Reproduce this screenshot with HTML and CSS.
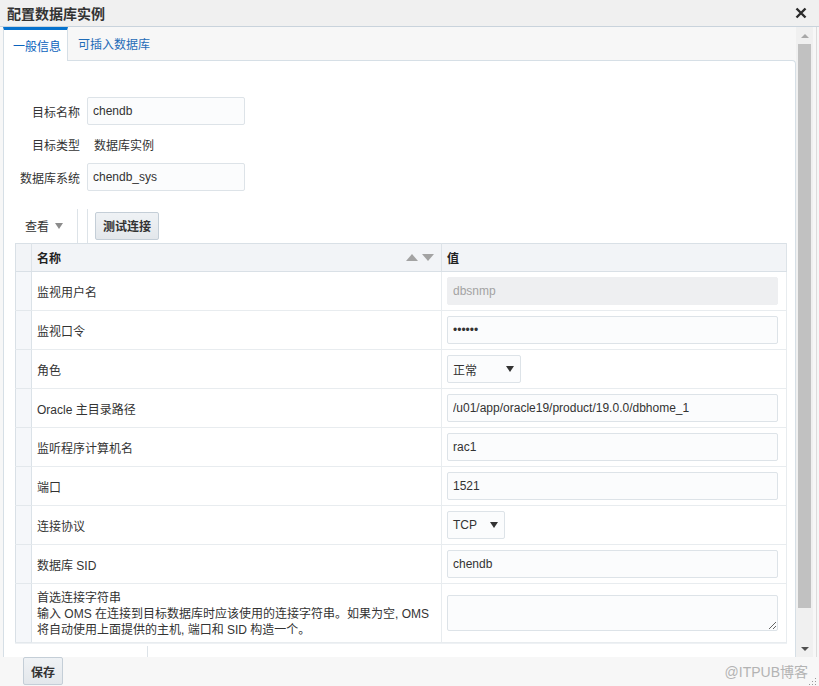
FILE: index.html
```html
<!DOCTYPE html>
<html lang="zh">
<head>
<meta charset="utf-8">
<title>配置数据库实例</title>
<link rel="stylesheet" href="styles.css">
</head>
<body>
<div class="dialog">
  <div class="titlebar">
    <span class="title">配置数据库实例</span>
    <svg class="close" width="12" height="12" viewBox="0 0 12 12"><path d="M1.5 1.5 L10.5 10.5 M10.5 1.5 L1.5 10.5" stroke="#2b2b2b" stroke-width="2.4" fill="none"/></svg>
  </div>
  <div class="main">
    <div class="content">
      <div class="tabs">
        <div class="tab active">一般信息</div>
        <div class="tab">可插入数据库</div>
      </div>
      <div class="panel">
        <div class="form">
          <label class="lbl">目标名称</label><input class="field" type="text" value="chendb">
          <label class="lbl">目标类型</label><span class="static">数据库实例</span>
          <label class="lbl">数据库系统</label><input class="field" type="text" value="chendb_sys">
        </div>
        <div class="toolbar">
          <div class="view">查看<span class="caret"></span></div>
          <div class="sep"></div>
          <div class="sep sep2"></div>
          <button class="btn">测试连接</button>
        </div>
        <table class="grid">
          <colgroup><col class="c-rh"><col class="c-name"><col class="c-val"></colgroup>
          <thead>
            <tr class="hdr">
              <th class="rh"></th>
              <th><div class="th-inner"><span>名称</span><span class="sort"><i class="up"></i><i class="down"></i></span></div></th>
              <th>值</th>
            </tr>
          </thead>
          <tbody>
            <tr><td class="rh"></td><td class="name">监视用户名</td><td class="val"><input class="field wide disabled" type="text" value="dbsnmp" disabled></td></tr>
            <tr><td class="rh"></td><td class="name">监视口令</td><td class="val"><input class="field wide pwd" type="password" value="abcdef"></td></tr>
            <tr><td class="rh"></td><td class="name">角色</td><td class="val"><div class="select s-role"><span>正常</span><span class="sel-arrow"></span></div></td></tr>
            <tr><td class="rh"></td><td class="name">Oracle 主目录路径</td><td class="val"><input class="field wide" type="text" value="/u01/app/oracle19/product/19.0.0/dbhome_1"></td></tr>
            <tr><td class="rh"></td><td class="name">监听程序计算机名</td><td class="val"><input class="field wide" type="text" value="rac1"></td></tr>
            <tr><td class="rh"></td><td class="name">端口</td><td class="val"><input class="field wide" type="text" value="1521"></td></tr>
            <tr><td class="rh"></td><td class="name">连接协议</td><td class="val"><div class="select s-proto"><span>TCP</span><span class="sel-arrow"></span></div></td></tr>
            <tr><td class="rh"></td><td class="name">数据库 SID</td><td class="val"><input class="field wide" type="text" value="chendb"></td></tr>
            <tr class="last"><td class="rh"></td><td class="name desc">首选连接字符串<br>输入 OMS 在连接到目标数据库时应该使用的连接字符串。如果为空, OMS<br>将自动使用上面提供的主机, 端口和 SID 构造一个。</td><td class="val top"><textarea class="area"></textarea></td></tr>
          </tbody>
        </table>
        <div class="after"><div class="vline"></div></div>
      </div>
    </div>
    <div class="scrollbar">
      <div class="sb-btn"><span class="sb-up"></span></div>
      <div class="sb-thumb"></div>
      <div class="sb-track"></div>
      <div class="sb-btn"><span class="sb-down"></span></div>
    </div>
    <div class="edge"></div>
  </div>
  <div class="footer">
    <button class="btn save">保存</button>
    <span class="wm">@ITPUB博客</span>
    <svg class="grip" width="8" height="8" viewBox="0 0 8 8"><rect x="6" y="0" width="1" height="1" fill="#9a9a9a"/><rect x="3" y="3" width="1" height="1" fill="#9a9a9a"/><rect x="6" y="3" width="1" height="1" fill="#9a9a9a"/><rect x="0" y="6" width="1" height="1" fill="#9a9a9a"/><rect x="3" y="6" width="1" height="1" fill="#9a9a9a"/><rect x="6" y="6" width="1" height="1" fill="#9a9a9a"/></svg>
  </div>
</div>
</body>
</html>
```

FILE: styles.css
```css
* { box-sizing: border-box; }
html, body { margin: 0; padding: 0; }
body {
  font-family: "Liberation Sans", "Noto Sans CJK SC", sans-serif;
  font-size: 12px;
  color: #333;
  background: #f7f7f7;
}
.dialog {
  width: 819px;
  height: 686px;
  overflow: hidden;
  display: flex;
  flex-direction: column;
}
.titlebar {
  height: 27px;
  flex: none;
  background: #f0f0f0;
  border-bottom: 1px solid #c9d3dc;
  display: flex;
  align-items: center;
  justify-content: space-between;
  padding: 0 12px 1px 7px;
}
.title { font-size: 14px; font-weight: bold; color: #333; }
.close { display: block; }

.main { display: flex; height: 630px; flex: none; }
.content { width: 796px; display: flex; flex-direction: column; }
.tabs { display: flex; height: 33px; flex: none; padding-left: 3px; }
.tab {
  display: flex;
  align-items: center;
  padding: 0 10px 0 10px;
  color: #1f6cb8;
  font-size: 12px;
}
.tab.active {
  position: relative;
  z-index: 1;
  height: 34px;
  margin-bottom: -1px;
  background: #fff;
  border-top: 3px solid #0572ce;
  border-left: 1px solid #d6dfe6;
  border-right: 1px solid #d6dfe6;
  padding: 0 6px 0 9px;
  color: #0b63bd;
}
.panel {
  flex: 1;
  margin-left: 3px;
  background: #fff;
  border: 1px solid #d6dfe6;
  border-bottom: none;
  border-top-right-radius: 4px;
  overflow: hidden;
}

.form {
  margin-top: 36px;
  display: grid;
  grid-template-columns: 76px 158px;
  grid-auto-rows: 28px;
  column-gap: 7px;
  row-gap: 5px;
  align-items: center;
}
.lbl { text-align: right; color: #333; }
.static { padding-left: 7px; color: #333; }
.field {
  height: 28px;
  border: 1px solid #dde3e8;
  border-radius: 2px;
  background: #fbfcfd;
  padding: 0 5px;
  font-family: "Liberation Sans", "Noto Sans CJK SC", sans-serif;
  font-size: 12px;
  color: #333;
  outline: none;
}

.toolbar {
  margin-top: 17px;
  height: 35px;
  display: flex;
  align-items: center;
}
.view {
  margin-left: 21px;
  display: flex;
  align-items: center;
  color: #333;
}
.caret {
  margin-left: 6px;
  width: 0; height: 0;
  border-left: 4.5px solid transparent;
  border-right: 4.5px solid transparent;
  border-top: 6px solid #8c8c8c;
  margin-top: 1px;
}
.sep { width: 1px; height: 34px; background: #dde3e8; margin-left: 14px; align-self: flex-start; margin-top: 1px; }
.sep2 { margin-left: 9px; }
.btn {
  height: 28px;
  border: 1px solid #c4ced7;
  border-radius: 2px;
  background: linear-gradient(#eff2f5, #e3e7eb);
  font-family: "Liberation Sans", "Noto Sans CJK SC", sans-serif;
  font-size: 12px;
  font-weight: bold;
  color: #333;
  padding: 0 7px;
}
.toolbar .btn { margin-left: 7px; }

.grid {
  margin-left: 11px;
  width: 772px;
  border-collapse: collapse;
  table-layout: fixed;
  border: 1px solid #d9e0e6;
  box-shadow: 0 1px 0 #eef1f4;
}
.c-rh { width: 16px; }
.c-name { width: 410px; }
.grid th {
  height: 28px;
  background: #f2f4f7;
  border-bottom: 1px solid #d9e0e6;
  border-right: 1px solid #dde3e8;
  text-align: left;
  font-weight: bold;
  font-size: 12px;
  color: #222;
  padding: 0 6px 0 5px;
}
.grid th.rh { padding: 0; }
.th-inner { display: flex; align-items: center; justify-content: space-between; }
.sort { display: flex; align-items: center; gap: 4px; margin-right: 1px; }
.sort i { display: block; width: 0; height: 0; border-left: 6.5px solid transparent; border-right: 6.5px solid transparent; }
.sort .up { border-bottom: 7px solid #a3a3a3; }
.sort .down { border-top: 7px solid #a3a3a3; }
.grid td {
  height: 39px;
  border-bottom: 1px solid #e8ecef;
  border-right: 1px solid #e8ecef;
  padding: 0;
  vertical-align: middle;
}
.grid td.rh { background: #f5f7fa; border-right: 1px solid #dbe2e8; border-bottom-color: #e3e8ec; }
.grid td.name { padding-left: 5px; color: #333; }
.grid td.val { padding-left: 5px; }
.grid tr.last td { height: 59px; }
.grid td.desc { vertical-align: top; padding-top: 6px; line-height: 16px; }
.grid td.top { vertical-align: top; padding-top: 11px; }
.wide { width: 331px; display: block; }
.disabled { background: #eeeff1; border-color: #eeeff1; color: #a3a3a3; }
.pwd { font-size: 12px; letter-spacing: 0; }
.select {
  height: 28px;
  border: 1px solid #dde3e8;
  border-radius: 2px;
  background: #fbfcfd;
  display: flex;
  align-items: center;
  justify-content: space-between;
  padding: 0 6px 0 5px;
  color: #333;
}
.s-role { width: 74px; }
.s-proto { width: 58px; }
.sel-arrow { width: 0; height: 0; border-left: 4px solid transparent; border-right: 4px solid transparent; border-top: 6px solid #333; }
.area {
  display: block;
  width: 331px;
  height: 36px;
  border: 1px solid #dde3e8;
  border-radius: 2px;
  background: #fbfcfd;
  resize: both;
}
.after { margin-top: 3px; height: 20px; padding-left: 143px; }
.vline { width: 1px; height: 100%; background: #dde3e8; }

.scrollbar { width: 17px; background: #f0f0f0; display: flex; flex-direction: column; align-items: center; }
.sb-btn { height: 17px; flex: none; width: 17px; display: flex; align-items: center; justify-content: center; }
.sb-up { width: 0; height: 0; border-left: 4px solid transparent; border-right: 4px solid transparent; border-bottom: 4px solid #a8a8a8; }
.sb-down { width: 0; height: 0; border-left: 4px solid transparent; border-right: 4px solid transparent; border-top: 4px solid #505050; }
.sb-thumb { width: 13px; height: 564px; background: #c1c1c1; flex: none; }
.sb-track { flex: 1; }
.edge { width: 6px; border-left: 3px solid #f7f7f7; }
.edge::after { content: ""; display: block; width: 1px; height: 100%; background: #dcdcdc; }

.footer {
  flex: 1;
  background: #f7f7f7;
  display: flex;
  align-items: flex-start;
  padding-left: 23px;
}
.save { height: 28px; padding: 0 7px; }
.wm { margin-left: auto; align-self: center; font-size: 14px; color: #b3b3b3; margin-right: 1px; margin-top: -1px; }
.grip { align-self: flex-end; margin: 0 2px 0 0; display: block; }
```
